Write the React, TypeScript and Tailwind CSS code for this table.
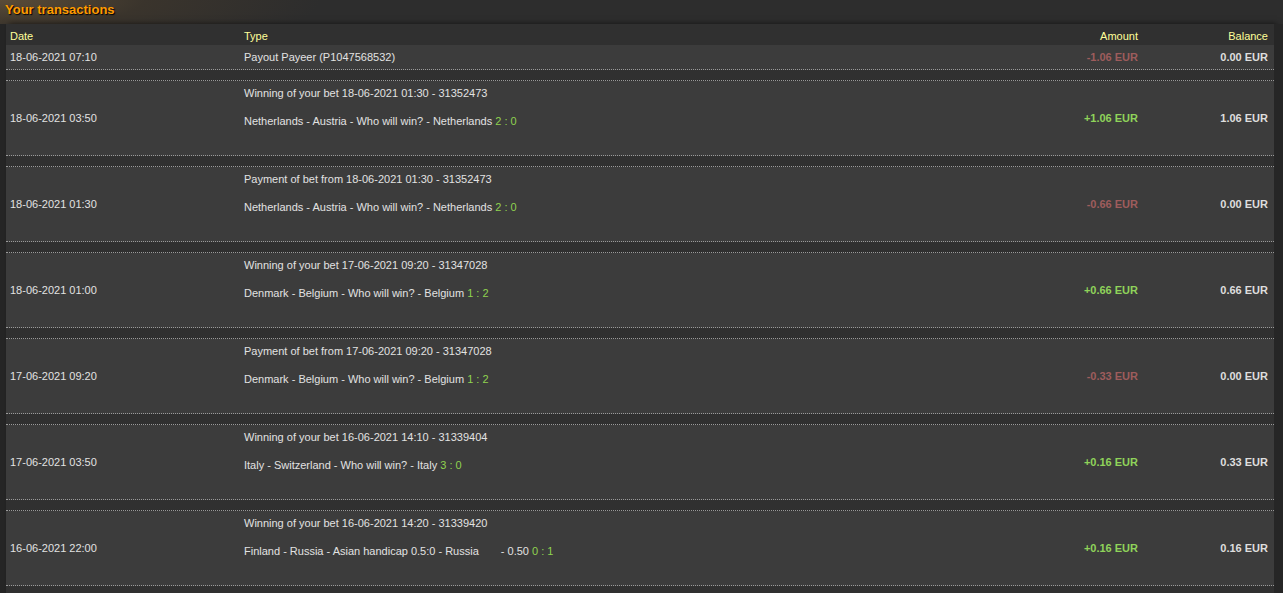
import React from "react";

type Tx = {
  date: string;
  line1: string;
  line2?: string;
  extra?: string;
  score?: string;
  amount: string;
  balance: string;
};

const txs: Tx[] = [
  { date: "18-06-2021 07:10", line1: "Payout Payeer (P1047568532)", amount: "-1.06 EUR", balance: "0.00 EUR" },
  {
    date: "18-06-2021 03:50",
    line1: "Winning of your bet 18-06-2021 01:30 - 31352473",
    line2: "Netherlands - Austria - Who will win? - Netherlands",
    score: "2 : 0",
    amount: "+1.06 EUR",
    balance: "1.06 EUR",
  },
  {
    date: "18-06-2021 01:30",
    line1: "Payment of bet from 18-06-2021 01:30 - 31352473",
    line2: "Netherlands - Austria - Who will win? - Netherlands",
    score: "2 : 0",
    amount: "-0.66 EUR",
    balance: "0.00 EUR",
  },
  {
    date: "18-06-2021 01:00",
    line1: "Winning of your bet 17-06-2021 09:20 - 31347028",
    line2: "Denmark - Belgium - Who will win? - Belgium",
    score: "1 : 2",
    amount: "+0.66 EUR",
    balance: "0.66 EUR",
  },
  {
    date: "17-06-2021 09:20",
    line1: "Payment of bet from 17-06-2021 09:20 - 31347028",
    line2: "Denmark - Belgium - Who will win? - Belgium",
    score: "1 : 2",
    amount: "-0.33 EUR",
    balance: "0.00 EUR",
  },
  {
    date: "17-06-2021 03:50",
    line1: "Winning of your bet 16-06-2021 14:10 - 31339404",
    line2: "Italy - Switzerland - Who will win? - Italy",
    score: "3 : 0",
    amount: "+0.16 EUR",
    balance: "0.33 EUR",
  },
  {
    date: "16-06-2021 22:00",
    line1: "Winning of your bet 16-06-2021 14:20 - 31339420",
    line2: "Finland - Russia - Asian handicap 0.5:0 - Russia",
    extra: "- 0.50",
    score: "0 : 1",
    amount: "+0.16 EUR",
    balance: "0.16 EUR",
  },
];

const grid = "grid grid-cols-[234px_1fr_140px_132px]";

function Row({ tx }: { tx: Tx }) {
  const positive = tx.amount.startsWith("+");
  const multi = !!tx.line2;
  return (
    <div className={`${grid} items-center border-b border-dotted border-[#9a9a9a] bg-[#3c3c3c] ${multi ? "h-[75px]" : "h-[25px]"}`}>
      <div className="pl-[4px]">{tx.date}</div>
      <div className={`px-[4px] ${multi ? "self-start pt-[5px]" : ""}`}>
        <div>{tx.line1}</div>
        {multi && (
          <div className="mt-[14px]">
            {tx.line2}
            {tx.extra && <span className="ml-[22px]">{tx.extra}</span>}{" "}
            <span className="text-[#8fd24f]">{tx.score}</span>
          </div>
        )}
      </div>
      <div className={`pr-[4px] text-right font-bold ${positive ? "text-[#8fd35a]" : "text-[#9e5c5c]"}`}>{tx.amount}</div>
      <div className="pr-[6px] text-right font-bold text-[#dedede]">{tx.balance}</div>
    </div>
  );
}

export default function App() {
  return (
    <div className="min-h-screen overflow-hidden bg-[#2d2d2d] bg-[radial-gradient(ellipse_320px_60px_at_0%_0%,#5a4c38_0%,#3a342c_45%,#2d2d2d_100%)] font-['Liberation_Sans',Arial,sans-serif] text-[11px] leading-[14px] text-[#e2e2e2]">
      <h1 className="h-[24px] pl-[5px] pt-[2px] text-[13px] font-bold leading-[15px] text-[#ff9c00] [text-shadow:1px_1px_1px_#000]">
        Your transactions
      </h1>
      <div className="flex">
        <div className="w-[6px] shrink-0 bg-[#262626]" />
        <div className="w-[1268px] shrink-0 shadow-[3px_0_6px_rgba(0,0,0,0.6)]">
          <div className={`${grid} h-[21px] items-start bg-[#303030] pt-[5px] text-[#ffff99]`}>
            <div className="pl-[4px]">Date</div>
            <div className="px-[4px]">Type</div>
            <div className="pr-[4px] text-right">Amount</div>
            <div className="pr-[6px] text-right">Balance</div>
          </div>
          {txs.map((tx, i) => (
            <React.Fragment key={i}>
              {i > 0 && <div className="h-[11px] border-b border-dotted border-[#9a9a9a] bg-[#303030]" />}
              <Row tx={tx} />
            </React.Fragment>
          ))}
          <div className="h-[11px] border-b border-dotted border-[#9a9a9a] bg-[#303030]" />
        </div>
        <div className="flex-1 bg-[#262626]" />
      </div>
    </div>
  );
}
